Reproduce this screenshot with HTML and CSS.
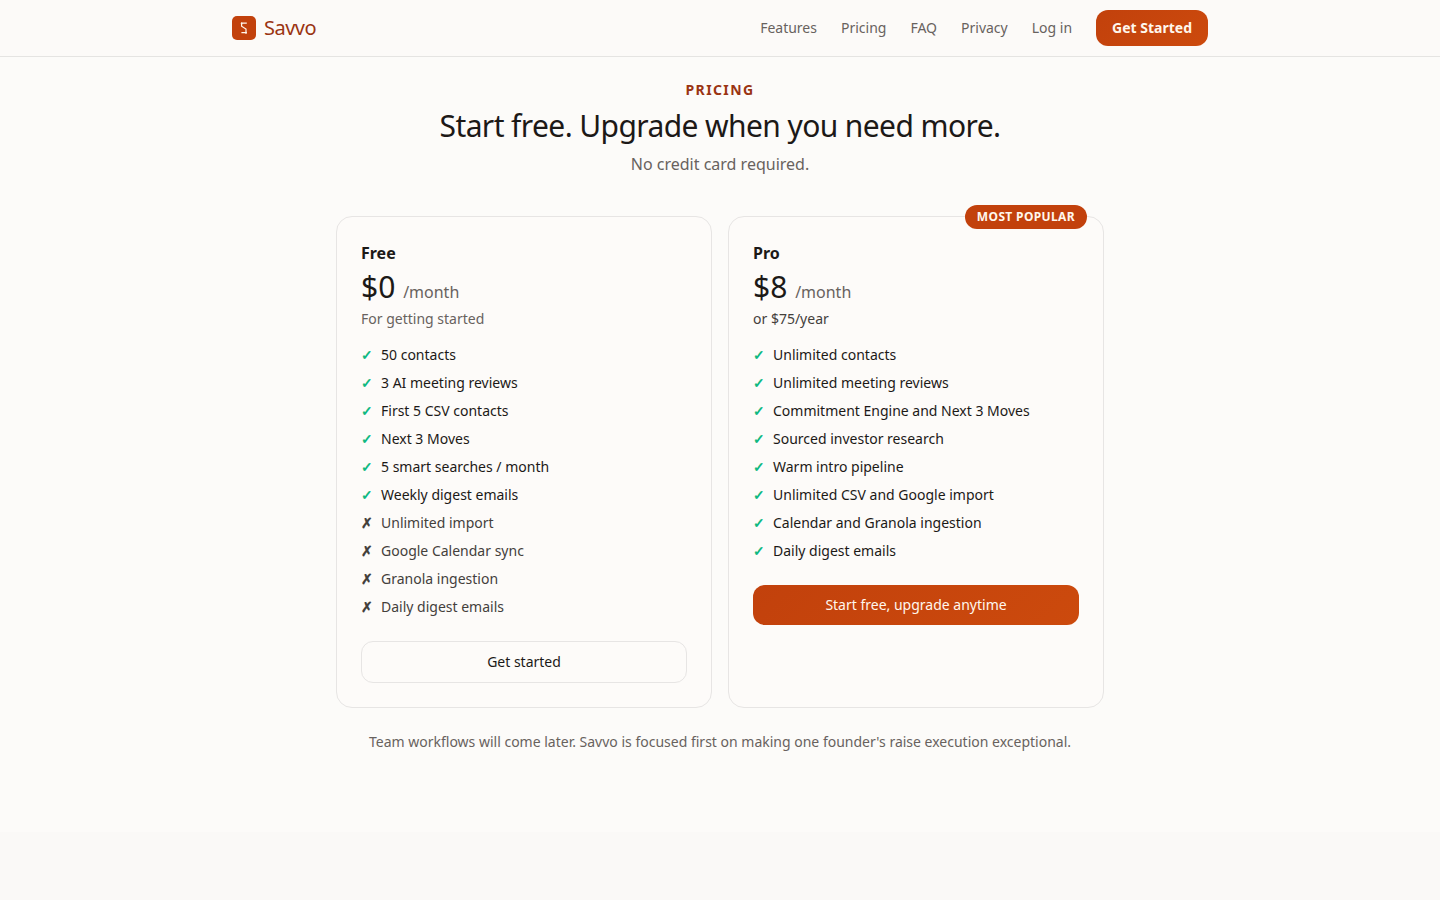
FILE: index.html
```html
<!DOCTYPE html>
<html lang="en">
<head>
    <meta charset="UTF-8">
    <meta name="viewport" content="width=device-width, initial-scale=1.0">
    <title>Savvo - Pricing</title>
    <link rel="stylesheet" href="styles.css">
</head>
<body>
    <header class="site-header">
        <div class="header-inner">
            <a class="brand" href="#">
                <svg class="brand-logo" viewBox="0 0 24 24" aria-hidden="true">
                    <rect width="24" height="24" rx="5" fill="#C2410C"/>
                    <path d="M14.8 7.2H9.6V10.2L14 13V16.7H9.4" fill="none" stroke="#FFF7ED" stroke-width="1.2"/>
                    <circle cx="9.6" cy="7.4" r="0.9" fill="#FFF7ED"/>
                    <circle cx="14" cy="16.8" r="1" fill="#FFF7ED"/>
                </svg>
                <span>Savvo</span>
            </a>
            <nav class="main-nav">
                <a href="#features">Features</a>
                <a href="#pricing">Pricing</a>
                <a href="#faq">FAQ</a>
                <a href="#privacy">Privacy</a>
                <a href="#login">Log in</a>
                <button type="button" class="nav-button">Get Started</button>
            </nav>
        </div>
    </header>

    <main class="pricing" id="pricing">
        <div class="pricing-inner">
            <div class="pricing-header">
                <p class="eyebrow">PRICING</p>
                <h1>Start free. Upgrade when you need more.</h1>
                <p class="subtitle">No credit card required.</p>
            </div>

            <div class="plans">
                <section class="plan">
                    <h2>Free</h2>
                    <p class="price">$0 <span>/month</span></p>
                    <p class="plan-note">For getting started</p>
                    <ul class="features">
                        <li>50 contacts</li>
                        <li>3 AI meeting reviews</li>
                        <li>First 5 CSV contacts</li>
                        <li>Next 3 Moves</li>
                        <li>5 smart searches / month</li>
                        <li>Weekly digest emails</li>
                        <li class="missing">Unlimited import</li>
                        <li class="missing">Google Calendar sync</li>
                        <li class="missing">Granola ingestion</li>
                        <li class="missing">Daily digest emails</li>
                    </ul>
                    <button type="button" class="plan-button outline">Get started</button>
                </section>

                <section class="plan">
                    <span class="badge">MOST POPULAR</span>
                    <h2>Pro</h2>
                    <p class="price">$8 <span>/month</span></p>
                    <p class="plan-note dark">or $75/year</p>
                    <ul class="features">
                        <li>Unlimited contacts</li>
                        <li>Unlimited meeting reviews</li>
                        <li>Commitment Engine and Next 3 Moves</li>
                        <li>Sourced investor research</li>
                        <li>Warm intro pipeline</li>
                        <li>Unlimited CSV and Google import</li>
                        <li>Calendar and Granola ingestion</li>
                        <li>Daily digest emails</li>
                    </ul>
                    <button type="button" class="plan-button">Start free, upgrade anytime</button>
                </section>
            </div>

            <p class="team-note">Team workflows will come later. Savvo is focused first on making one founder's raise execution exceptional.</p>
        </div>
    </main>
</body>
</html>
```
FILE: styles.css
```css
* {
    box-sizing: border-box;
}

body {
    margin: 0;
    min-height: 100vh;
    background-color: #FAF9F7;
    color: #1C1917;
    font-family: 'Noto Sans', sans-serif;
    font-size: 14px;
    line-height: 20px;
}

h1, h2, p, ul {
    margin: 0;
    padding: 0;
}

a {
    color: inherit;
    text-decoration: none;
}

button {
    font-family: inherit;
    font-size: 14px;
    line-height: 20px;
    border: none;
    border-radius: 12px;
    background: linear-gradient(135deg, #C2410C, #CC4A0D);
    color: #FFF7ED;
    cursor: pointer;
}

/* Header */
.site-header {
    background-color: #FCFAF8;
    border-bottom: 1px solid #E5E4E2;
}

.header-inner {
    display: flex;
    align-items: center;
    justify-content: space-between;
    max-width: 1024px;
    height: 56px;
    margin: 0 auto;
    padding: 0 24px;
}

.brand {
    display: flex;
    align-items: center;
    gap: 8px;
    color: #9A3412;
    font-size: 20px;
    line-height: 28px;
    letter-spacing: -0.025em;
}

.brand-logo {
    width: 24px;
    height: 24px;
}

.main-nav {
    display: flex;
    align-items: center;
    gap: 24px;
    color: #68625E;
}

.nav-button {
    padding: 8px 16px;
    font-weight: 700;
}

/* Pricing */
.pricing {
    padding: 23px 24px 80px;
    background-color: #FCFBF9;
}

.pricing-inner {
    max-width: 768px;
    margin: 0 auto;
}

.pricing-header {
    margin-bottom: 40px;
    text-align: center;
}

.eyebrow {
    color: #9A3412;
    font-weight: 700;
    letter-spacing: 0.1em;
}

h1 {
    margin: 6px 0;
    font-size: 30px;
    font-weight: 400;
    line-height: 40px;
    letter-spacing: -0.02em;
}

.subtitle {
    color: #68625E;
    font-size: 16px;
    line-height: 24px;
}

.plans {
    display: grid;
    grid-template-columns: 1fr 1fr;
    gap: 16px;
}

.plan {
    position: relative;
    padding: 24px;
    border: 1px solid #E7E5E4;
    border-radius: 16px;
    background-color: #FDFBF9;
}

.badge {
    position: absolute;
    top: -12px;
    right: 16px;
    padding: 4px 12px;
    border-radius: 12px;
    background-color: #C2410C;
    color: #FFF7ED;
    font-size: 12px;
    font-weight: 700;
    line-height: 16px;
    letter-spacing: 0.03em;
}

.plan h2 {
    font-size: 16px;
    font-weight: 700;
    line-height: 24px;
}

.price {
    margin: 4px 0;
    font-size: 30px;
    line-height: 36px;
}

.price span {
    color: #68625E;
    font-size: 16px;
    line-height: 24px;
}

.plan-note {
    color: #68625E;
}

.plan-note.dark {
    color: #44403C;
}

.features {
    display: flex;
    flex-direction: column;
    gap: 8px;
    margin: 16px 0 24px;
    list-style: none;
}

.features li {
    display: flex;
    gap: 8px;
}

.features li::before {
    content: "✓";
    color: #10B981;
    font-weight: 700;
}

.features .missing {
    color: #44403C;
}

.features .missing::before {
    content: "✗";
    color: #44403C;
}

.plan-button {
    width: 100%;
    padding: 10px 16px;
}

.plan-button.outline {
    border: 1px solid #E7E5E4;
    background: none;
    color: #1C1917;
}

.team-note {
    margin-top: 24px;
    color: #68625E;
    text-align: center;
}

@media (max-width: 700px) {
    .plans {
        grid-template-columns: 1fr;
    }

    .main-nav a {
        display: none;
    }
}
```
